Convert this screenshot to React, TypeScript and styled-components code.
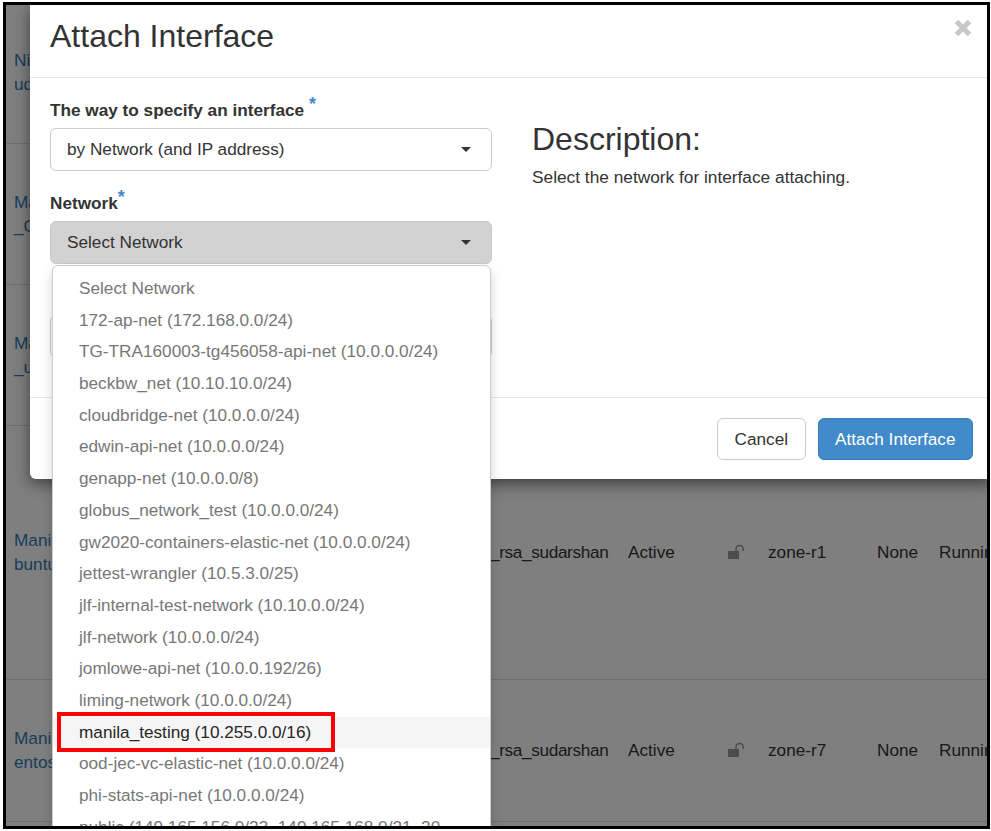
import React from 'react';
import styled, { createGlobalStyle } from 'styled-components';

const networks = [
  'Select Network',
  '172-ap-net (172.168.0.0/24)',
  'TG-TRA160003-tg456058-api-net (10.0.0.0/24)',
  'beckbw_net (10.10.10.0/24)',
  'cloudbridge-net (10.0.0.0/24)',
  'edwin-api-net (10.0.0.0/24)',
  'genapp-net (10.0.0.0/8)',
  'globus_network_test (10.0.0.0/24)',
  'gw2020-containers-elastic-net (10.0.0.0/24)',
  'jettest-wrangler (10.5.3.0/25)',
  'jlf-internal-test-network (10.10.0.0/24)',
  'jlf-network (10.0.0.0/24)',
  'jomlowe-api-net (10.0.0.192/26)',
  'liming-network (10.0.0.0/24)',
  'manila_testing (10.255.0.0/16)',
  'ood-jec-vc-elastic-net (10.0.0.0/24)',
  'phi-stats-api-net (10.0.0.0/24)',
  'public (149.165.156.0/23, 149.165.168.0/21, 20',
];

const instances = [
  { height: 139, pad: 5, name: ['Ni', 'ud'] },
  { height: 141, pad: 0, name: ['Ma', '_Cu'] },
  { height: 141, pad: 0, name: ['Ma', '_ub'] },
  { height: 254, pad: 2, name: ['Mani', 'buntu'], zone: 'zone-r1' },
  { height: 142, pad: 2, name: ['Mani', 'entos'], zone: 'zone-r7' },
];

const GlobalStyle = createGlobalStyle`
  html, body {
    margin: 0;
    padding: 0;
    background: #fff;
  }
  body {
    font-family: "Liberation Sans", Arial, sans-serif;
    font-size: 17.2px;
    color: #333;
  }
`;

const Frame = styled.div`
  position: relative;
  box-sizing: border-box;
  width: 987px;
  height: 827px;
  margin: 2px 0 0 3px;
  border: 3px solid #000;
  overflow: hidden;
  background: #fff;
`;

const Row = styled.div<{ $height: number; $pad: number }>`
  box-sizing: border-box;
  height: ${(p) => p.$height}px;
  padding-bottom: ${(p) => p.$pad}px;
  border-bottom: 1px solid #ddd;
  display: grid;
  grid-template-columns: 484px 138px 99px 41px 109px 62px 1fr;
  align-items: center;
  line-height: 24px;
  white-space: nowrap;
`;

const NameCell = styled.a`
  display: block;
  padding-left: 8px;
  color: #337ab7;
`;

const Line = styled.div``;

const KeyName = styled.span`
  letter-spacing: -0.35px;
`;

const Backdrop = styled.div`
  position: absolute;
  inset: 0;
  background: rgba(0, 0, 0, 0.5);
`;

const Modal = styled.div`
  position: absolute;
  top: 0;
  left: 24px;
  width: 963px;
  height: 474px;
  display: flex;
  flex-direction: column;
  background: #fff;
  border-radius: 0 0 6px 6px;
  box-shadow: 0 5px 15px rgba(0, 0, 0, 0.5);
`;

const Header = styled.header`
  box-sizing: border-box;
  height: 73px;
  flex: none;
  padding: 0 21px 0 20px;
  display: flex;
  justify-content: space-between;
  border-bottom: 1px solid #e5e5e5;
`;

const Title = styled.h4`
  margin: 12px 0 0;
  font-size: 32px;
  font-weight: 400;
  line-height: 38px;
`;

const CloseIcon = styled.svg`
  width: 18px;
  height: 18px;
  margin-top: 14px;
  color: #c8c8c8;
`;

const Body = styled.div`
  box-sizing: border-box;
  height: 319px;
  flex: none;
  padding: 20px 20px 0;
  display: grid;
  grid-template-columns: 442px 1fr;
  column-gap: 40px;
`;

const FormColumn = styled.div`
  display: flex;
  flex-direction: column;
`;

const Label = styled.label`
  display: block;
  height: 30px;
  font-weight: 700;
  line-height: 24px;
`;

const Star = styled.sup<{ $gap: number }>`
  margin-left: ${(p) => p.$gap}px;
  color: #428bca;
  font-size: 18px;
  font-weight: 700;
  line-height: 0;
  vertical-align: 6px;
`;

const Field = styled.div<{ $top?: number }>`
  position: relative;
  margin-top: ${(p) => p.$top ?? 0}px;
  margin-bottom: 20px;
`;

const SelectBox = styled.div<{ $open?: boolean }>`
  box-sizing: border-box;
  height: 43px;
  padding: 0 20px 0 16px;
  display: flex;
  align-items: center;
  justify-content: space-between;
  background: ${(p) => (p.$open ? '#d2d2d2' : '#fff')};
  border: 1px solid ${(p) => (p.$open ? '#c8c8c8' : '#ccc')};
  border-radius: 6px;
`;

const Caret = styled.span`
  width: 0;
  height: 0;
  border-top: 5px solid #333;
  border-left: 5px solid transparent;
  border-right: 5px solid transparent;
`;

const Menu = styled.ul`
  position: absolute;
  z-index: 2;
  top: 44px;
  left: 2px;
  width: 439px;
  box-sizing: border-box;
  margin: 0;
  padding: 7px 0 0;
  list-style: none;
  background: #fff;
  border: 1px solid #ccc;
  border-radius: 6px;
  box-shadow: 0 6px 12px rgba(0, 0, 0, 0.175);
`;

const Option = styled.li<{ $active: boolean }>`
  position: relative;
  height: 31.7px;
  padding-left: 26px;
  line-height: 31.7px;
  white-space: nowrap;
  color: ${(p) => (p.$active ? '#262626' : '#777')};
  background: ${(p) => (p.$active ? '#f5f5f5' : 'transparent')};
`;

const Callout = styled.span`
  position: absolute;
  top: -5px;
  left: 4px;
  width: 278px;
  height: 40px;
  box-sizing: border-box;
  border: 4px solid #f00;
`;

const Aside = styled.div`
  padding-top: 23px;
`;

const AsideTitle = styled.h4`
  margin: 0 0 8px;
  font-size: 32px;
  font-weight: 400;
  line-height: 36px;
`;

const AsideText = styled.p`
  margin: 0;
  font-size: 17.3px;
  line-height: 24px;
`;

const Footer = styled.footer`
  box-sizing: border-box;
  flex: 1;
  padding: 20px 20px 0;
  display: flex;
  justify-content: flex-end;
  gap: 12px;
  border-top: 1px solid #e5e5e5;
`;

const Button = styled.button<{ $primary?: boolean }>`
  height: 42px;
  padding: 0 16.5px;
  font: inherit;
  color: ${(p) => (p.$primary ? '#fff' : '#333')};
  background: ${(p) => (p.$primary ? '#428bca' : '#fff')};
  border: 1px solid ${(p) => (p.$primary ? '#357ebd' : '#ccc')};
  border-radius: 6px;
`;

const LockIcon = styled.svg`
  display: block;
  width: 18px;
  height: 16px;
  color: #999;
`;

function App() {
  return (
    <Frame>
      <GlobalStyle />
      {instances.map((item) => (
        <Row key={item.name.join('-')} $height={item.height} $pad={item.pad}>
          <NameCell>
            <Line>{item.name[0]}</Line>
            <Line>{item.name[1]}</Line>
          </NameCell>
          {item.zone && (
            <>
              <KeyName>_rsa_sudarshan</KeyName>
              <span>Active</span>
              <LockIcon viewBox="0 0 18 16">
                <rect x="1" y="7" width="11" height="8" fill="currentColor" />
                <path
                  d="M9 7V5a3.6 3.6 0 0 1 7.2 0v2"
                  fill="none"
                  stroke="currentColor"
                  strokeWidth="1.5"
                />
              </LockIcon>
              <span>{item.zone}</span>
              <span>None</span>
              <span>Running</span>
            </>
          )}
        </Row>
      ))}
      <Row $height={60} $pad={0} />
      <Backdrop />
      <Modal>
        <Header>
          <Title>Attach Interface</Title>
          <CloseIcon viewBox="0 0 18 18">
            <path
              d="M2.5 2.5l13 13M15.5 2.5l-13 13"
              stroke="currentColor"
              strokeWidth="5"
            />
          </CloseIcon>
        </Header>
        <Body>
          <FormColumn>
            <Label>
              The way to specify an interface<Star $gap={5}>*</Star>
            </Label>
            <Field>
              <SelectBox>
                by Network (and IP address)
                <Caret />
              </SelectBox>
            </Field>
            <Label>
              Network<Star $gap={0}>*</Star>
            </Label>
            <Field>
              <SelectBox $open>
                Select Network
                <Caret />
              </SelectBox>
              <Menu>
                {networks.map((name) => {
                  const active = name.startsWith('manila_testing');
                  return (
                    <Option key={name} $active={active}>
                      {name}
                      {active && <Callout />}
                    </Option>
                  );
                })}
              </Menu>
            </Field>
            <Field $top={31}>
              <SelectBox />
            </Field>
          </FormColumn>
          <Aside>
            <AsideTitle>Description:</AsideTitle>
            <AsideText>Select the network for interface attaching.</AsideText>
          </Aside>
        </Body>
        <Footer>
          <Button>Cancel</Button>
          <Button $primary>Attach Interface</Button>
        </Footer>
      </Modal>
    </Frame>
  );
}

export default App;
